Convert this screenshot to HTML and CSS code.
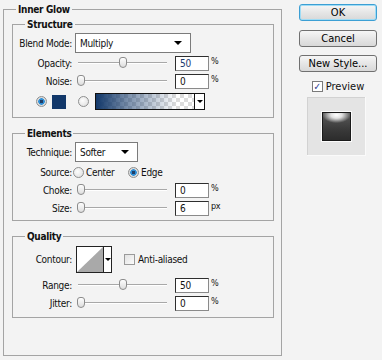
FILE: index.html
```html
<!DOCTYPE html>
<html lang="en">
<head>
    <meta charset="UTF-8">
    <title>Inner Glow</title>
    <link rel="stylesheet" href="styles.css">
</head>
<body>
    <div class="dialog">
        <div class="panel">
            <div class="title">Inner Glow</div>

            <div class="group group-structure">
                <div class="title">Structure</div>
                <div class="row row-blend">
                    <span class="lbl">Blend Mode:</span>
                    <div class="select select-blend"><span>Multiply</span><i class="caret"></i></div>
                </div>
                <div class="row">
                    <span class="lbl">Opacity:</span>
                    <div class="slider"><div class="rail"><span class="thumb" style="left: 50%"></span></div></div>
                    <span class="num num-active">50</span>
                    <span class="unit">%</span>
                </div>
                <div class="row">
                    <span class="lbl">Noise:</span>
                    <div class="slider"><div class="rail"><span class="thumb" style="left: 0%"></span></div></div>
                    <span class="num">0</span>
                    <span class="unit">%</span>
                </div>
                <div class="row row-color">
                    <span class="radio radio-on"></span>
                    <span class="swatch"></span>
                    <span class="radio radio-second"></span>
                    <div class="gradient"><span class="gradient-drop"><i class="caret"></i></span></div>
                </div>
            </div>

            <div class="group group-elements">
                <div class="title">Elements</div>
                <div class="row row-technique">
                    <span class="lbl">Technique:</span>
                    <div class="select select-technique"><span>Softer</span><i class="caret"></i></div>
                </div>
                <div class="row row-source">
                    <span class="lbl">Source:</span>
                    <label class="option option-center"><span class="radio"></span>Center</label>
                    <label class="option"><span class="radio radio-on"></span>Edge</label>
                </div>
                <div class="row">
                    <span class="lbl">Choke:</span>
                    <div class="slider"><div class="rail"><span class="thumb" style="left: 0%"></span></div></div>
                    <span class="num">0</span>
                    <span class="unit">%</span>
                </div>
                <div class="row">
                    <span class="lbl">Size:</span>
                    <div class="slider"><div class="rail"><span class="thumb" style="left: 0%"></span></div></div>
                    <span class="num">6</span>
                    <span class="unit">px</span>
                </div>
            </div>

            <div class="group group-quality">
                <div class="title">Quality</div>
                <div class="row row-contour">
                    <span class="lbl">Contour:</span>
                    <div class="contour">
                        <svg class="contour-curve" width="26" height="25" viewBox="0 0 26 25">
                            <polygon points="0,25 26,0 26,25" fill="#a9a9a9"/>
                        </svg>
                        <span class="contour-drop"><i class="caret"></i></span>
                    </div>
                    <span class="check"></span>
                    <span class="check-text">Anti-aliased</span>
                </div>
                <div class="row">
                    <span class="lbl">Range:</span>
                    <div class="slider"><div class="rail"><span class="thumb" style="left: 50%"></span></div></div>
                    <span class="num">50</span>
                    <span class="unit">%</span>
                </div>
                <div class="row">
                    <span class="lbl">Jitter:</span>
                    <div class="slider"><div class="rail"><span class="thumb" style="left: 0%"></span></div></div>
                    <span class="num">0</span>
                    <span class="unit">%</span>
                </div>
            </div>
        </div>

        <div class="side">
            <div class="btn btn-default">OK</div>
            <div class="btn">Cancel</div>
            <div class="btn btn-style">New Style...</div>
            <label class="preview-toggle"><span class="check check-on">&#10003;</span>Preview</label>
            <div class="preview">
                <div class="preview-tile"></div>
            </div>
        </div>
    </div>
</body>
</html>
```

FILE: styles.css
```css
body {
    margin: 0;
    padding: 9px 0 0 3px;
    background-color: #f3f3f3;
    font-family: "DejaVu Sans Condensed", "DejaVu Sans", sans-serif;
    font-size: 10px;
    letter-spacing: -0.3px;
    color: #111;
}

.dialog {
    display: flex;
    align-items: flex-start;
}

/* etched boxes with their caption sitting on the top line */
.panel,
.group {
    box-sizing: border-box;
    border: 1px solid #a4a4a4;
}

.title {
    width: fit-content;
    margin-top: -7px;
    padding: 0 2px;
    font-weight: bold;
    line-height: 13px;
    background-color: #f3f3f3;
}

.panel {
    width: 279px;
    height: 347px;
    padding: 0 7px 0 8px;
}

.panel > .title {
    margin-left: 4px;
}

.group {
    width: 262px;
}

.group > .title {
    margin-left: 12px;
}

.group-structure {
    margin-top: 8px;
    padding-bottom: 4px;
}

.group-elements {
    margin-top: 15px;
    padding-bottom: 3px;
}

.group-quality {
    margin-top: 15px;
    padding-bottom: 5px;
}

.row {
    display: flex;
    align-items: center;
    height: 18px;
}

.lbl {
    flex: none;
    width: 59px;
    text-align: right;
}

.row-blend {
    height: 22px;
    margin-top: 1px;
}

.row-color {
    height: 23px;
    padding-left: 23px;
}

.row-technique {
    height: 24px;
}

.row-source {
    height: 17px;
}

.row-contour {
    height: 33px;
}

/* dropdowns */
.select {
    display: flex;
    align-items: center;
    justify-content: space-between;
    box-sizing: border-box;
    height: 20px;
    margin-left: 3px;
    padding: 0 8px 0 4px;
    background-color: #fff;
    border: 1px solid #7b7b7b;
}

.select-blend {
    width: 116px;
}

.select-technique {
    width: 63px;
}

.caret {
    width: 0;
    height: 0;
    border-left: 4px solid transparent;
    border-right: 4px solid transparent;
    border-top: 4px solid #000;
}

/* sliders */
.slider {
    position: relative;
    flex: none;
    width: 92px;
    height: 12px;
    margin-left: 5px;
}

.slider::before {
    content: "";
    position: absolute;
    left: 1px;
    right: 2px;
    top: 5px;
    height: 1px;
    background-color: #a8a8a8;
    border-bottom: 1px solid #fff;
}

.rail {
    position: relative;
    width: 84px;
    height: 12px;
}

.thumb {
    position: absolute;
    top: 0;
    box-sizing: border-box;
    width: 8px;
    height: 11px;
    background: linear-gradient(#fdfdfd, #dedede);
    border: 1px solid #8c8c8c;
    border-radius: 3px 3px 4px 4px;
}

/* number fields */
.num {
    flex: none;
    box-sizing: border-box;
    width: 34px;
    height: 15px;
    margin-left: 6px;
    padding-left: 4px;
    line-height: 13px;
    background-color: #fff;
    border: 1px solid #2e2e2e;
    border-right-color: #8a8a8a;
    border-bottom-color: #8a8a8a;
}

.num-active {
    color: #1c3b6e;
}

.unit {
    margin-left: 2px;
    margin-top: -5px;
    font-size: 9px;
}

/* radios and checks */
.radio {
    flex: none;
    box-sizing: border-box;
    width: 11px;
    height: 11px;
    border: 1px solid #8e8f8f;
    border-radius: 50%;
    background: radial-gradient(circle at 40% 40%, #fdfdfd, #dcdcdc);
}

.radio-on {
    background: radial-gradient(circle, #1f3d66 0 1.5px, #2f8fd6 2px 3px, #dcdcdc 3.5px);
}

.swatch {
    flex: none;
    width: 14px;
    height: 14px;
    margin-left: 5px;
    background-color: #12386a;
}

.radio-second {
    margin-left: 12px;
}

.gradient {
    display: flex;
    justify-content: flex-end;
    box-sizing: border-box;
    width: 110px;
    height: 17px;
    margin-left: 6px;
    border: 1px solid #111;
    background:
        linear-gradient(to right, #12386a, rgba(18, 56, 106, 0.55) 30%, rgba(18, 56, 106, 0) 75%),
        repeating-conic-gradient(#dcdcdc 0 25%, #fff 0 50%) 0 0 / 8px 8px;
}

.gradient-drop {
    display: flex;
    align-items: center;
    justify-content: center;
    width: 9px;
    background-color: #fff;
    border-left: 1px solid #111;
}

.gradient-drop .caret {
    border-left-width: 3px;
    border-right-width: 3px;
    border-top-width: 3px;
}

.option {
    display: flex;
    align-items: center;
    gap: 2px;
}

.option-center {
    width: 55px;
    margin-left: 1px;
}

/* contour picker */
.contour {
    display: flex;
    box-sizing: border-box;
    width: 36px;
    height: 27px;
    margin-left: 4px;
    background-color: #fff;
    border: 1px solid #222;
}

.contour-curve {
    display: block;
}

.contour-drop {
    display: flex;
    align-items: center;
    justify-content: center;
    flex: 1;
    border-left: 1px solid #222;
}

.contour-drop .caret {
    border-left-width: 3px;
    border-right-width: 3px;
    border-top-width: 3px;
}

.check {
    flex: none;
    box-sizing: border-box;
    width: 11px;
    height: 11px;
    margin-left: 12px;
    border: 1px solid #9a9a9a;
    background: linear-gradient(135deg, #e2e2e2, #fbfbfb);
}

.check-text {
    margin-left: 3px;
}

/* right column */
.side {
    display: flex;
    flex-direction: column;
    width: 78px;
    margin-left: 17px;
    margin-top: -5px;
}

.btn {
    box-sizing: border-box;
    height: 17px;
    margin-top: 9px;
    font-size: 11px;
    line-height: 15px;
    letter-spacing: 0;
    text-align: center;
    color: #000;
    background: linear-gradient(#f6f6f6, #e6e6e6 50%, #d8d8d8);
    border: 1px solid #707070;
    border-radius: 3px;
}

.btn-default {
    margin-top: 0;
    border-color: #3c9fd4;
    box-shadow: inset 0 0 0 1px #9fdcf5;
}

.btn-style {
    margin-top: 8px;
}

.preview-toggle {
    display: flex;
    align-items: center;
    justify-content: center;
    gap: 3px;
    height: 12px;
    margin-top: 8px;
    font-size: 11px;
    letter-spacing: 0;
}

.preview-toggle .check {
    margin-left: 0;
    font-size: 10px;
    line-height: 9px;
    font-weight: bold;
    text-align: center;
    color: #2a3b8f;
    background: #fff;
    border-color: #7a7a7a;
}

.preview {
    display: flex;
    align-items: center;
    justify-content: center;
    width: 59px;
    height: 59px;
    margin: 5px 0 0 8px;
    background-color: #e4e4e4;
    box-shadow: inset -1px -1px 0 #fafafa, inset 1px 1px 0 #d2d2d2;
}

.preview-tile {
    box-sizing: border-box;
    width: 29px;
    height: 29px;
    border: 1px solid #1a1a1a;
    box-shadow: 0 0 0 1px #fbfbfb;
    background:
        radial-gradient(ellipse 14px 8px at 50% 2px, #ffffff 0%, #e0e0e0 40%, rgba(80, 80, 80, 0) 100%),
        linear-gradient(#5a5a5a, #3a3a3a 60%, #2c2c2c);
}
```
